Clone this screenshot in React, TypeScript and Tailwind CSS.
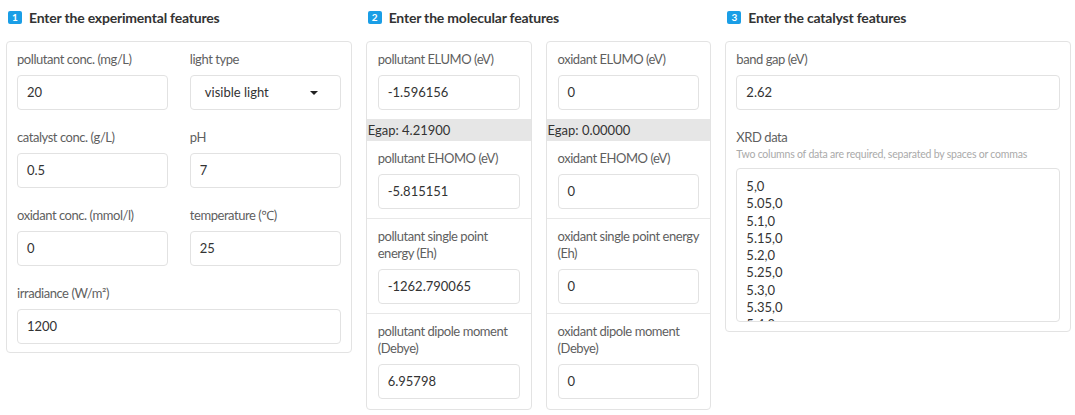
const font = { fontFamily: "Lato, 'Noto Sans', sans-serif" };

function Heading({ n, title }: { n: number; title: string }) {
  return (
    <div className="flex items-start gap-[7px] pl-[2px] pt-[9px] h-[35px] mb-[6px]">
      <span className="mt-[2px] w-[14px] h-[13px] rounded-[2px] bg-[#1a9ee6] text-white text-[10px] font-bold leading-[13px] text-center">
        {n}
      </span>
      <span className="text-[14px] font-bold text-[#333] leading-[18px] tracking-[-0.2px]">{title}</span>
    </div>
  );
}

function Field({ label, value, select }: { label: string; value: string; select?: boolean }) {
  return (
    <div>
      <div className="text-[13px] leading-[17px] text-[#5f5f5f] mb-[7px] tracking-[-0.45px]">{label}</div>
      {select ? (
        <div className="h-[35px] border border-[#e2e2e2] rounded-[4px] bg-white flex items-center justify-between pl-[14px] pr-[22px] text-[13px] text-[#333]">
          <span>{value}</span>
          <span className="w-0 h-0 border-l-[4px] border-r-[4px] border-t-[4px] border-l-transparent border-r-transparent border-t-[#222]" />
        </div>
      ) : (
        <div className="h-[35px] border border-[#e2e2e2] rounded-[4px] bg-white flex items-center px-[9px] text-[13px] text-[#333]">
          {value}
        </div>
      )}
    </div>
  );
}

function MolCard({ rows, egap }: { rows: [string, string][]; egap: string }) {
  return (
    <div className="flex-1 border border-[#e3e3e3] rounded-[4px] bg-white overflow-hidden">
      <div className="px-[11px] py-[9px]">
        <Field label={rows[0][0]} value={rows[0][1]} />
      </div>
      <div className="h-[22px] bg-[#e6e6e6] text-[13px] leading-[22px] text-[#333] pl-[1px]">{egap}</div>
      {rows.slice(1).map(([l, v], i) => (
        <div
          key={l}
          className={`px-[11px] pt-[9px] ${i < rows.length - 2 ? "pb-[9px] border-b border-[#e8e8e8]" : "pb-[10px]"}`}
        >
          <Field label={l} value={v} />
        </div>
      ))}
    </div>
  );
}

const xrd = ["5,0", "5.05,0", "5.1,0", "5.15,0", "5.2,0", "5.25,0", "5.3,0", "5.35,0", "5.4,0"];

export default function App() {
  return (
    <div style={font} className="w-[1075px] h-[415px] bg-white flex gap-[14px] pl-[6px] pr-[4px] overflow-hidden">
      {/* experimental */}
      <div className="flex-1">
        <Heading n={1} title="Enter the experimental features" />
        <div className="border border-[#e3e3e3] rounded-[4px] px-[10px] pt-[9px] pb-[8px] grid grid-cols-2 gap-x-[22px] gap-y-[19px]">
          <Field label="pollutant conc. (mg/L)" value="20" />
          <Field label="light type" value="visible light" select />
          <Field label="catalyst conc. (g/L)" value="0.5" />
          <Field label="pH" value="7" />
          <Field label="oxidant conc. (mmol/l)" value="0" />
          <Field label="temperature (℃)" value="25" />
          <div className="col-span-2">
            <Field label="irradiance (W/m²)" value="1200" />
          </div>
        </div>
      </div>

      {/* molecular */}
      <div className="flex-1">
        <Heading n={2} title="Enter the molecular features" />
        <div className="flex gap-[14px]">
          <MolCard
            egap="Egap: 4.21900"
            rows={[
              ["pollutant ELUMO (eV)", "-1.596156"],
              ["pollutant EHOMO (eV)", "-5.815151"],
              ["pollutant single point energy (Eh)", "-1262.790065"],
              ["pollutant dipole moment (Debye)", "6.95798"],
            ]}
          />
          <MolCard
            egap="Egap: 0.00000"
            rows={[
              ["oxidant ELUMO (eV)", "0"],
              ["oxidant EHOMO (eV)", "0"],
              ["oxidant single point energy (Eh)", "0"],
              ["oxidant dipole moment (Debye)", "0"],
            ]}
          />
        </div>
      </div>

      {/* catalyst */}
      <div className="flex-1">
        <Heading n={3} title="Enter the catalyst features" />
        <div className="border border-[#e3e3e3] rounded-[4px] px-[10px] pt-[9px] pb-[9px]">
          <Field label="band gap (eV)" value="2.62" />
          <div className="text-[13px] leading-[17px] text-[#5f5f5f] mt-[19px] tracking-[-0.45px]">XRD data</div>
          <div className="text-[10.5px] leading-[16px] text-[#aaa] mb-[6px] tracking-[-0.2px]">
            Two columns of data are required, separated by spaces or commas
          </div>
          <div className="h-[154px] border border-[#e2e2e2] rounded-[4px] overflow-hidden px-[9px] pt-[9px] text-[13px] leading-[17.3px] text-[#333]">
            {xrd.map((l) => (
              <div key={l}>{l}</div>
            ))}
          </div>
        </div>
      </div>
    </div>
  );
}
